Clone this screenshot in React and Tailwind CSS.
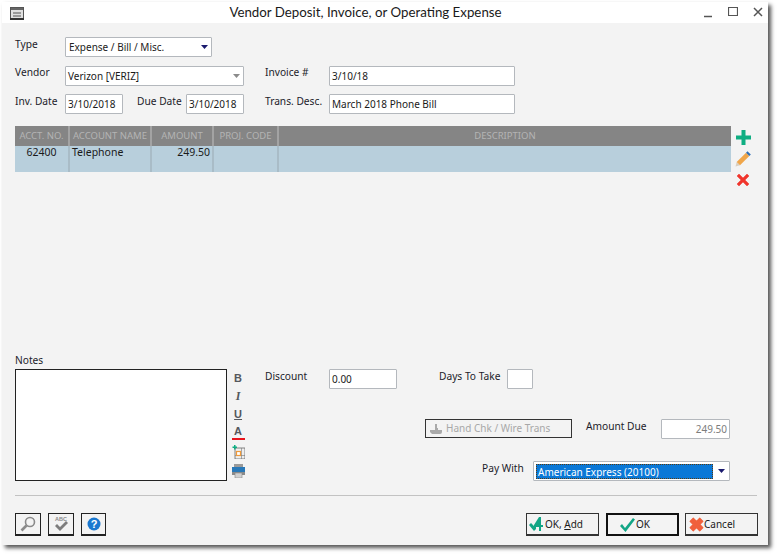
import React from 'react';

const Caret = ({ color = '#1a1a6e' }) => (
  <svg width="7" height="4" viewBox="0 0 7 4"><path d="M0 0h7L3.500 4z" fill={color} /></svg>
);

const Field = ({ className = '', children }) => (
  <div className={`h-[20px] bg-white border border-[#b4b8bd] rounded-[1px] flex items-center px-[2px] text-[10px] text-[#1a1a1a] ${className}`}>
    {children}
  </div>
);

const Label = ({ className = '', children }) => (
  <div className={`text-[10.200px] leading-[14px] text-[#1c1c2a] ${className}`}>{children}</div>
);

const HeadCell = ({ className = '', children }) => (
  <div className={`flex items-center justify-center border-r-2 border-[#a3a3a3] text-[#b4b4b4] text-[9.500px] ${className}`}>{children}</div>
);

const RowCell = ({ className = '', children }) => (
  <div className={`border-r-2 border-[#a9bcc7] text-[10.500px] text-[#1a1a1a] leading-[13px] ${className}`}>{children}</div>
);

const ActionBtn = ({ className = '', icon, children }) => (
  <button className={`h-[23px] w-[73px] bg-[#f3f3f3] flex items-center text-[10px] text-[#1a1a1a] ${className}`}>
    {icon}
    {children}
  </button>
);

const SmallBtn = ({ className = '', children }) => (
  <button className={`h-[23px] border border-[#222] border-b-2 bg-[#f3f3f3] flex items-center justify-center ${className}`}>{children}</button>
);

export default function App() {
  return (
    <div className="w-[781px] h-[559px] bg-white pt-[2px] pl-[2px] overflow-hidden" style={{ fontFamily: '"Noto Sans", "Open Sans", sans-serif' }}>
      <div className="w-[766px] h-[543px] bg-[#f3f3f3] shadow-[3px_3px_4px_#555] flex flex-col">
        {/* title bar */}
        <div className="h-[21px] bg-white flex items-center shrink-0">
          <svg className="ml-[8px] mt-[1px]" width="15" height="13" viewBox="0 0 15 13">
            <rect x=".5" y=".5" width="13" height="11" fill="#e0e0e0" stroke="#555" />
            <rect x="1" y="1" width="12" height="2" fill="#666" />
            <path d="M3 5h8v2H3zM3 8h8v2H3z" fill="#999" />
            <rect x="0" y="11" width="14" height="2" fill="#333" />
          </svg>
          <div className="flex-1 text-center text-[13.300px] text-[#1a1a1a] leading-[21px] pl-[3px]" style={{ fontFamily: 'Lato, sans-serif' }}>Vendor Deposit, Invoice, or Operating Expense</div>
          <svg width="10" height="10" viewBox="0 0 10 10" className="mr-[15px] mt-[2px]"><path d="M1 7.500h8" stroke="#555" strokeWidth="1.500" /></svg>
          <svg width="10" height="10" viewBox="0 0 10 10" className="mr-[15px] mb-[3px]"><path d="M.5 1.500h9v8h-9z M.5 1.500h9" fill="none" stroke="#555" strokeWidth="1.200" /></svg>
          <svg width="10" height="10" viewBox="0 0 10 10" className="mr-[5px] mb-[1px]"><path d="M1 1l8 8M9 1l-8 8" stroke="#555" strokeWidth="1.500" /></svg>
        </div>

        <div className="pl-[13px] flex flex-col flex-1">
          {/* type */}
          <div className="flex mt-[14px]">
            <Label className="w-[50px]">Type</Label>
            <Field className="w-[147px] justify-between pr-[3px] text-[#222] border-[#a8acb0]">
              <span className="ml-[1px]">Expense / Bill / Misc.</span>
              <Caret />
            </Field>
          </div>

          {/* vendor */}
          <div className="flex mt-[9px]">
            <Label className="w-[50px] -mt-[1px]">Vendor</Label>
            <Field className="w-[179px] justify-between pr-[3px]">
              <span>Verizon [VERIZ]</span>
              <Caret color="#8b8b8b" />
            </Field>
            <Label className="w-[64px] ml-[21px] -mt-[1px]">Invoice #</Label>
            <Field className="w-[186px]">3/10/18</Field>
          </div>

          {/* dates */}
          <div className="flex mt-[8px]">
            <Label className="w-[50px]">Inv. Date</Label>
            <Field className="w-[58px]">3/10/2018</Field>
            <Label className="w-[49px] ml-[14px]">Due Date</Label>
            <Field className="w-[58px]">3/10/2018</Field>
            <Label className="w-[64px] ml-[21px]">Trans. Desc.</Label>
            <Field className="w-[186px]">March 2018 Phone Bill</Field>
          </div>

          {/* lines table + actions */}
          <div className="flex mt-[12px] h-[227px]">
            <div className="w-[716px] h-[46px]">
              <div className="h-[20px] bg-[#858585] flex">
                <HeadCell className="w-[55px]">ACCT. NO.</HeadCell>
                <HeadCell className="w-[82px]">ACCOUNT NAME</HeadCell>
                <HeadCell className="w-[62px]">AMOUNT</HeadCell>
                <HeadCell className="w-[65px]">PROJ. CODE</HeadCell>
                <div className="flex-1 flex items-center justify-center text-[#b4b4b4] text-[9.500px]">DESCRIPTION</div>
              </div>
              <div className="h-[26px] bg-[#b8cfdc] flex">
                <RowCell className="w-[55px] text-center">62400</RowCell>
                <RowCell className="w-[82px] pl-[2px]">Telephone</RowCell>
                <RowCell className="w-[62px] text-right pr-[2px]">249.50</RowCell>
                <RowCell className="w-[65px]"></RowCell>
              </div>
            </div>
            <div className="ml-[4px] flex flex-col items-center w-[16px]">
              <svg className="mt-[4px]" width="15" height="15" viewBox="0 0 15 15"><path d="M5.500 0h4v5.500H15v4H9.500V15h-4V9.500H0v-4h5.500z" fill="#0fae82" /></svg>
              <svg className="mt-[6px]" width="16" height="16" viewBox="0 0 16 16">
                <path d="M0.500 15.500l1.200-4.500 3.300 3.300z" fill="#d9cfc0" />
                <path d="M1.700 11L11 1.700l3.300 3.300L5 14.300z" fill="#f0a64a" />
                <path d="M11 1.700l1.500-1.500 3.300 3.300L14.300 5z" fill="#2f6fb7" />
              </svg>
              <svg className="mt-[6px]" width="14" height="14" viewBox="0 0 14 14"><path d="M1 3l2-2 4 4 4-4 2 2-4 4 4 4-2 2-4-4-4 4-2-2 4-4z" fill="#f0352c" stroke="#f0352c" strokeWidth=".5" /></svg>
            </div>
          </div>

          {/* lower section */}
          <div className="flex">
            <div className="w-[214px]">
              <Label>Notes</Label>
              <div className="h-[112px] bg-white border border-[#222] mt-[2px]"></div>
            </div>

            <div className="w-[18px] ml-[2px] mt-[16px] flex flex-col items-center text-[#55585c]">
              <div className="h-[18px] text-[11px] font-bold leading-[18px]" style={{ fontFamily: '"Liberation Sans", sans-serif' }}>B</div>
              <div className="h-[18px] text-[12px] font-bold italic leading-[18px]" style={{ fontFamily: '"Liberation Serif", serif' }}>I</div>
              <div className="h-[19px] text-[11px] font-bold underline leading-[18px]" style={{ fontFamily: '"Liberation Sans", sans-serif' }}>U</div>
              <div className="h-[14px] w-[13px] text-[11px] font-bold text-center leading-[15px] border-b-2 border-b-[#e8141c] box-content" style={{ fontFamily: '"Liberation Sans", sans-serif' }}>A</div>
              <svg className="mt-[5px]" width="13" height="14" viewBox="0 0 13 14">
                <path d="M3 3h10v11H3z" fill="#eee" stroke="#666" strokeWidth=".8" />
                <path d="M9.500 3v11M3 10.500h10" stroke="#777" strokeWidth=".6" />
                <rect x="4.500" y="6.500" width="4" height="4" fill="#fff" stroke="#f09a3a" strokeWidth="1.200" />
                <path d="M2 0h1.500v1.500H5V3H3.500v1.500H2V3H.5V1.500H2z" fill="#0fae82" />
              </svg>
              <svg className="mt-[5px]" width="13" height="14" viewBox="0 0 13 14">
                <path d="M2 0h9v3H2z" fill="#9a9a9a" />
                <path d="M0 3h13v5H0z" fill="#2878b8" />
                <path d="M0 8h13v3H0z" fill="#8a8a8a" />
                <path d="M3 9h7v5H3z" fill="#d0d0d0" stroke="#888" strokeWidth=".6" />
              </svg>
            </div>

            <div className="ml-[18px] flex-1 pr-[38px]">
              <div className="flex mt-[16px]">
                <Label className="w-[64px]">Discount</Label>
                <Field className="w-[68px]">0.00</Field>
                <Label className="ml-[42px] w-[68px]">Days To Take</Label>
                <Field className="w-[26px]"></Field>
              </div>

              <div className="flex mt-[30px]">
                <div className="ml-[160px] w-[147px] h-[19px] border border-[#333] flex items-center text-[10px] text-[#a8a8a8] pl-[3px] gap-[3px]">
                  <svg width="14" height="12" viewBox="0 0 14 12"><path d="M6 1h2v4h1v2h4v2a2 2 0 0 1-2 2H3L1 9V7h5z" fill="#a9a9a9" /></svg>
                  Hand Chk / Wire Trans
                </div>
                <Label className="ml-[14px] w-[75px]">Amount Due</Label>
                <Field className="w-[69px] justify-end text-[#7d7d7d]">249.50</Field>
              </div>

              <div className="flex mt-[22px]">
                <Label className="ml-[217px] w-[51px] pt-[0px]">Pay With</Label>
                <div className="w-[197px] h-[20px] bg-white border border-[#b4b8bd] rounded-[1px] flex items-center pl-[2px] pr-[4px]">
                  <div className="w-[177px] h-[15px] bg-[#0a78d7] text-white text-[10px] leading-[14px] border border-dotted border-[#5a3a10] pl-[1px] overflow-hidden">American Express (20100)</div>
                  <div className="flex-1 flex justify-end"><Caret /></div>
                </div>
              </div>
            </div>
          </div>

          {/* divider */}
          <div className="w-[742px] h-[1px] bg-[#c2c2c2] mt-[14px] shrink-0"></div>

          {/* footer */}
          <div className="flex mt-[17px]">
            <SmallBtn className="w-[26px]">
              <svg width="16" height="16" viewBox="0 0 16 16" fill="none" stroke="#8a8a8a"><circle cx="10" cy="6" r="4.500" strokeWidth="1.600" /><path d="M6.500 9.500L1.500 14.500" strokeWidth="2.600" /></svg>
            </SmallBtn>
            <SmallBtn className="w-[26px] ml-[7px]">
              <svg width="18" height="18" viewBox="0 0 18 18">
                <text x="9" y="6" textAnchor="middle" fontSize="5.500" fontWeight="700" fill="#8a8a8a" fontFamily="Liberation Sans, sans-serif">ABC</text>
                <path d="M3 11l2-2 3 3 6-6 2 2-8 8z" fill="#7d7d7d" />
              </svg>
            </SmallBtn>
            <SmallBtn className="w-[25px] ml-[7px]">
              <svg width="14" height="14" viewBox="0 0 14 14">
                <circle cx="7" cy="7" r="6.500" fill="#1a78d0" />
                <text x="7" y="11" textAnchor="middle" fontSize="11" fontWeight="700" fill="#fff" fontFamily="Liberation Sans, sans-serif">?</text>
              </svg>
            </SmallBtn>

            <ActionBtn className="ml-[420px] w-[72px] border border-[#333] border-b-2 pl-[2px]" icon={
              <svg width="16" height="15" viewBox="0 0 16 15"><path d="M0 8l2-2 3 3 2-2v5l-2 2z" fill="#12a585" /><path d="M10 0h2v8h2v2h-2v4h-2v-4H5V8z" fill="#12a585" /></svg>
            }>
              <span>OK, <u>A</u>dd</span>
            </ActionBtn>
            <ActionBtn className="ml-[7px] border-2 border-[#111] pl-[12px]" icon={
              <svg width="15" height="14" viewBox="0 0 15 14"><path d="M0 8l2-2 3 4 8-10 2 1.500L5.500 14z" fill="#12a585" /></svg>
            }>
              <span className="ml-[1px]">OK</span>
            </ActionBtn>
            <ActionBtn className="ml-[6px] border border-[#333] border-b-2 pl-[3px] text-[10.500px]" icon={
              <svg width="15" height="15" viewBox="0 0 14 14"><path d="M1 4l3-3 3 3 3-3 3 3-3 3 3 3-3 3-3-3-3 3-3-3 3-3z" fill="#f0603c" stroke="#f0603c" strokeLinejoin="round" /></svg>
            }>
              <span>Cancel</span>
            </ActionBtn>
          </div>
        </div>
      </div>
    </div>
  );
}
